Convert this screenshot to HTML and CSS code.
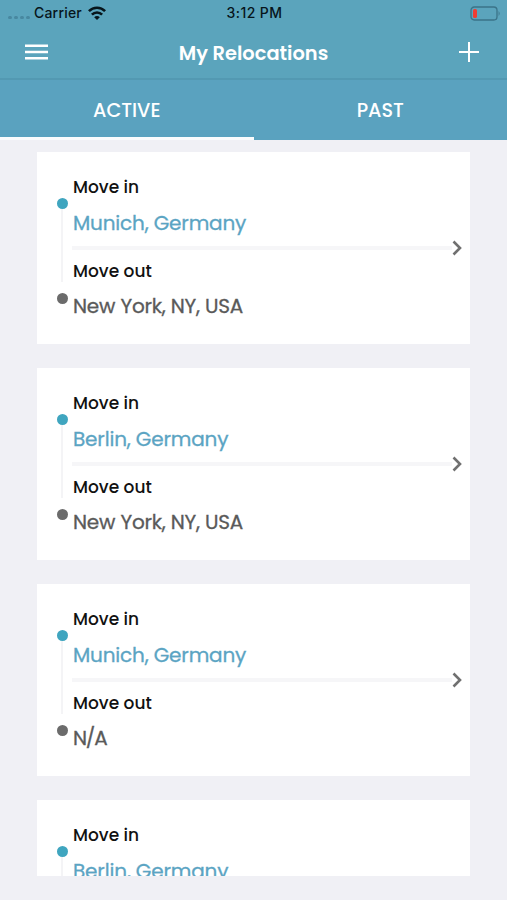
FILE: index.html
```html
<!DOCTYPE html>
<html lang="en">
<head>
  <meta charset="UTF-8" />
  <meta name="viewport" content="width=device-width, initial-scale=1" />
  <title>My Relocations</title>
  <link rel="stylesheet" href="styles.css">
</head>
<body>
  <div class="app">
    <header class="header">
      <!-- Status bar -->
      <div class="status">
        <div class="status-left">
          <span class="signal"><i></i><i></i><i></i><i></i></span>
          <span class="carrier">Carrier</span>
          <svg class="wifi" width="18" height="14" viewBox="0 0 18 14" fill="none" stroke="#07151b" stroke-width="2.6">
            <path d="M0.9 5.2 A11.3 11.3 0 0 1 17.1 5.2" />
            <path d="M3.9 8.6 A7.2 7.2 0 0 1 14.1 8.6" />
            <path d="M9 14 L6.2 11.2 A3.9 3.9 0 0 1 11.8 11.2 Z" fill="#07151b" stroke="none" />
          </svg>
        </div>
        <span class="time">3:12 PM</span>
        <svg class="battery" width="31" height="15" viewBox="0 0 31 15">
          <rect x="1" y="1" width="26" height="13" rx="3.2" fill="none" stroke="#3b7388" stroke-width="1.3" />
          <rect x="3" y="3" width="4" height="9" rx="1.6" fill="#f03c32" />
          <path d="M28.6 5 Q30.6 7.5 28.6 10 Z" fill="#3b7388" />
        </svg>
      </div>
      <!-- Title bar -->
      <div class="navbar">
        <svg class="menu" width="23" height="16" viewBox="0 0 23 16" stroke="#fff" stroke-width="2.4">
          <path d="M0 1.8 H23 M0 8 H23 M0 14.2 H23" />
        </svg>
        <h1 class="title">My Relocations</h1>
        <svg class="add" width="20" height="20" viewBox="0 0 20 20" stroke="#fff" stroke-width="2">
          <path d="M0 10 H20 M10 0 V20" />
        </svg>
      </div>
      <!-- Tabs -->
      <nav class="tabs">
        <a class="tab active">ACTIVE</a>
        <a class="tab">PAST</a>
      </nav>
    </header>

    <main class="list">
      <article class="card">
        <div class="track"><i class="dot in"></i><i class="line"></i><i class="dot out"></i></div>
        <div class="info">
          <p class="label">Move in</p>
          <p class="city to">Munich, Germany</p>
          <div class="divider"></div>
          <p class="label label-out">Move out</p>
          <p class="city from">New York, NY, USA</p>
        </div>
        <svg class="chevron" width="10" height="16" viewBox="0 0 10 16"><path d="M1.5 1.5 L8 8 L1.5 14.5" /></svg>
      </article>

      <article class="card">
        <div class="track"><i class="dot in"></i><i class="line"></i><i class="dot out"></i></div>
        <div class="info">
          <p class="label">Move in</p>
          <p class="city to">Berlin, Germany</p>
          <div class="divider"></div>
          <p class="label label-out">Move out</p>
          <p class="city from">New York, NY, USA</p>
        </div>
        <svg class="chevron" width="10" height="16" viewBox="0 0 10 16"><path d="M1.5 1.5 L8 8 L1.5 14.5" /></svg>
      </article>

      <article class="card">
        <div class="track"><i class="dot in"></i><i class="line"></i><i class="dot out"></i></div>
        <div class="info">
          <p class="label">Move in</p>
          <p class="city to">Munich, Germany</p>
          <div class="divider"></div>
          <p class="label label-out">Move out</p>
          <p class="city from empty">N/A</p>
        </div>
        <svg class="chevron" width="10" height="16" viewBox="0 0 10 16"><path d="M1.5 1.5 L8 8 L1.5 14.5" /></svg>
      </article>

      <!-- Cut off by the bottom of the list -->
      <article class="card">
        <div class="track"><i class="dot in"></i><i class="line"></i></div>
        <div class="info">
          <p class="label">Move in</p>
          <p class="city to">Berlin, Germany</p>
        </div>
      </article>
    </main>
  </div>
</body>
</html>
```
FILE: styles.css
```css
* {
  box-sizing: border-box;
  margin: 0;
  padding: 0;
}
body {
  background: #f0f0f5;
  font-family: Poppins, Inter, sans-serif;
}
.app {
  display: flex;
  flex-direction: column;
  height: 900px;
  padding-bottom: 24px;
  overflow: hidden;
}

/* Header */
.header {
  flex: none;
  height: 140px;
  background: #5ba4bc;
}
.status {
  display: grid;
  grid-template-columns: 1fr auto 1fr;
  align-items: center;
  height: 26px;
  padding: 0 6px 0 8px;
  color: #07151b;
  font-family: Inter, sans-serif;
  font-size: 14px;
  font-weight: 500;
}
.status-left {
  display: flex;
  align-items: center;
}
.carrier {
  padding-bottom: 2px;
  letter-spacing: 0.2px;
}
.time {
  padding-bottom: 2px;
  letter-spacing: 0.4px;
}
.signal {
  display: flex;
  gap: 2px;
  width: 26px;
  padding-top: 8px;
}
.signal i {
  width: 4px;
  height: 3px;
  border-radius: 2px;
  background: #4888a0;
}
.wifi {
  margin-left: 6px;
}
.battery {
  justify-self: end;
}
.navbar {
  display: flex;
  align-items: center;
  justify-content: space-between;
  height: 54px;
  padding: 0 28px 0 25px;
  border-bottom: 2px solid #5399b2;
}
.title {
  padding-top: 2px;
  color: #fff;
  font-size: 19.4px;
  font-weight: 600;
}

/* Tabs */
.tabs {
  display: flex;
  height: 60px;
  background: #5aa2bf;
}
.tab {
  flex: 1;
  display: flex;
  align-items: center;
  justify-content: center;
  padding-top: 3px;
  border-bottom: 3px solid transparent;
  color: #fff;
  font-size: 19.2px;
  font-weight: 500;
}
.tab.active {
  border-bottom-color: #fafcfd;
}

/* Relocation cards */
.list {
  flex: 1;
  display: flex;
  flex-direction: column;
  gap: 24px;
  padding: 12px 37px 0;
  overflow: hidden;
}
.card {
  flex: none;
  display: flex;
  align-items: center;
  height: 192px;
  padding: 0 8px 0 19px;
  background: #fff;
}
.track {
  display: flex;
  flex-direction: column;
  align-items: center;
  align-self: flex-start;
  width: 12px;
  padding-top: 46px;
}
.dot {
  width: 11px;
  height: 11px;
  border-radius: 50%;
}
.dot.in {
  background: #3fa5bf;
}
.dot.out {
  background: #6b6b6b;
}
.line {
  width: 2px;
  height: 73px;
  margin-bottom: 11px;
  background: #f4f4f6;
}
.info {
  flex: 1;
  align-self: flex-start;
  padding: 23px 0 0 4px;
}
.label {
  height: 24px;
  padding-left: 1px;
  color: #111;
  font-size: 17px;
  font-weight: 500;
  line-height: 24px;
}
.city {
  height: 30px;
  margin-top: 9px;
  padding-left: 1px;
  color: #5a5a5a;
  font-size: 20px;
  font-weight: 400;
  line-height: 30px;
  -webkit-text-stroke: 0.3px currentColor;
}
.city.to {
  color: #5ba4c3;
  letter-spacing: -0.16px;
}
.city.from {
  margin-top: 8px;
  letter-spacing: -0.2px;
}
.city.empty {
  letter-spacing: -1.2px;
}
.divider {
  height: 4px;
  margin-top: 8px;
  background: #f6f6f8;
}
.label-out {
  margin-top: 9px;
}
.chevron {
  fill: none;
  stroke: #707070;
  stroke-width: 2.6;
}
```
